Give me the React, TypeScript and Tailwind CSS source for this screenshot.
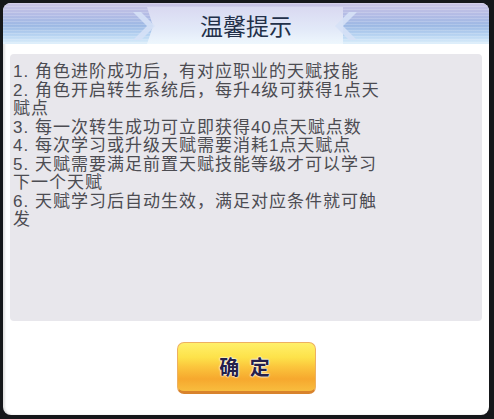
import React from 'react';

const tips = [
  '1. 角色进阶成功后，有对应职业的天赋技能',
  '2. 角色开启转生系统后，每升4级可获得1点天赋点',
  '3. 每一次转生成功可立即获得40点天赋点数',
  '4. 每次学习或升级天赋需要消耗1点天赋点',
  '5. 天赋需要满足前置天赋技能等级才可以学习下一个天赋',
  '6. 天赋学习后自动生效，满足对应条件就可触发',
];

function TitleTab() {
  return (
    <svg width="232" height="37" viewBox="0 0 232 37" className="absolute left-[126px] top-[4px]">
      <defs>
        <linearGradient id="tab" x1="0" y1="0" x2="0" y2="1">
          <stop offset="0" stopColor="#d9d9f1" />
          <stop offset="0.6" stopColor="#e2e9f8" />
          <stop offset="1" stopColor="#eef7fd" />
        </linearGradient>
      </defs>
      <polygon points="18,0 214,0 214,37 18,37 24,19" fill="url(#tab)" />
      <polygon points="4,5 12,5 26,19 12,33 4,33 18,19" fill="#d6e1f6" opacity="0.9" />
      <polygon points="228,5 220,5 206,19 220,33 228,33 214,19" fill="#d6e1f6" opacity="0.9" />
    </svg>
  );
}

export default function App() {
  return (
    <div className="w-[494px] h-[419px] bg-[#15171a] pt-[3px] pl-[3px] pr-[5px] pb-[4px]">
      <div className="flex h-full flex-col overflow-hidden rounded-[8px] bg-white shadow-[inset_2px_0_2px_rgba(0,0,0,0.12)]">
        <div className="relative h-[41px] shrink-0 bg-[image:repeating-linear-gradient(180deg,rgba(255,255,255,0.18)_0px,rgba(255,255,255,0.18)_1px,transparent_1px,transparent_3px),linear-gradient(180deg,#cbc5e5_0%,#b2bbe5_30%,#9db9e4_55%,#b9d5f2_80%,#dff0fb_100%)]">
          <TitleTab />
          <div className="relative flex h-full items-center justify-center pt-[4px] font-['Noto_Sans_CJK_SC',sans-serif] text-[23px] text-[#233049]">
            温馨提示
          </div>
        </div>

        <div className="mx-[7px] mt-[10px] h-[267px] shrink-0 rounded-[4px] bg-[#e8e7ec] pl-[3px] pt-[9px]">
          <div className="w-[372px] font-['Liberation_Sans','Noto_Sans_CJK_SC',sans-serif] text-[17px] leading-[18.5px] tracking-[1px] text-[#4c4c52]">
            {tips.map((t) => (
              <p key={t}>{t}</p>
            ))}
          </div>
        </div>

        <div className="flex flex-1 items-center justify-center">
          <button className="flex h-[52px] w-[139px] items-center justify-center rounded-[7px] border border-[#eeb060] border-b-[3px] border-b-[#d8832c] bg-[linear-gradient(180deg,#fff06a_0%,#fde24a_30%,#fbc53c_50%,#f6a82e_75%,#f8bd3e_100%)] font-['Noto_Sans_CJK_SC',sans-serif] text-[20px] font-bold tracking-[3px] text-[#25204a] [text-shadow:0_0_2px_#fff,0_0_2px_#fff,0_0_1px_#fff]">
            确 定
          </button>
        </div>
      </div>
    </div>
  );
}
